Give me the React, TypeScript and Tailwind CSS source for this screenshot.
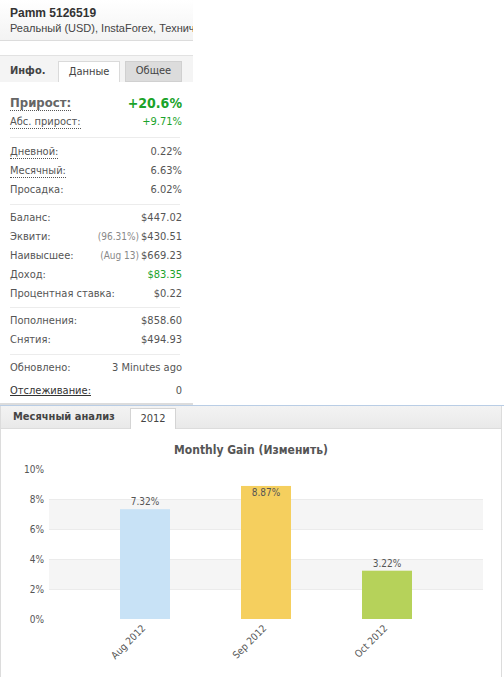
import React from "react";

const font = { fontFamily: '"DejaVu Sans Condensed", "DejaVu Sans", sans-serif' };

function Row({ label, value, dotted, underline, valueClass, pre }: { label: string; value: string; dotted?: boolean; underline?: boolean; valueClass?: string; pre?: string }) {
  return (
    <div className="flex justify-between items-center h-[19px] text-[11px] text-[#555]">
      <span className={dotted ? "border-b border-dotted border-[#555] leading-[12px]" : underline ? "underline text-[#333]" : ""}>{label}</span>
      <span className={valueClass ?? "text-[#555]"}>
        {pre && <span className="text-[10px] mr-[2px] text-[#888]">{pre}</span>}
        {value}
      </span>
    </div>
  );
}

function Divider({ cls = "my-[4px]" }: { cls?: string }) {
  return <div className={`h-px bg-[#ececec] mr-[2px] ${cls}`} />;
}

function Chart() {
  const y = (v: number) => 159 - v * 15;
  const bars = [
    { x: 119, v: 7.32, c: "#c8e2f6", label: "Aug 2012" },
    { x: 240, v: 8.87, c: "#f5cf5e", label: "Sep 2012" },
    { x: 361, v: 3.22, c: "#b6d25a", label: "Oct 2012" },
  ];
  return (
    <svg width="498" height="230" className="block" style={{ fontFamily: '"DejaVu Sans Condensed", "DejaVu Sans", sans-serif' }}>
      <rect x="48" y={y(8)} width="434" height="30" fill="#f5f5f5" />
      <rect x="48" y={y(4)} width="434" height="30" fill="#f5f5f5" />
      {[2, 4, 6, 8].map((v) => (
        <line key={v} x1="48" x2="482" y1={y(v) + 0.5} y2={y(v) + 0.5} stroke="#ebebeb" />
      ))}
      {[0, 2, 4, 6, 8, 10].map((v) => (
        <text key={v} x="43" y={y(v) + 4} textAnchor="end" fontSize="10" fill="#555">{v}%</text>
      ))}
      {bars.map((b) => (
        <g key={b.label}>
          <rect x={b.x} y={y(b.v)} width="50" height={b.v * 15} fill={b.c} />
          <text x={b.x + 25} y={y(b.v) + (b.v > 8.5 ? 10 : -4)} textAnchor="middle" fontSize="10" fill="#555">{b.v.toFixed(2)}%</text>
          <text transform={`translate(${b.x + 26} ${y(0) + 10}) rotate(-45)`} textAnchor="end" fontSize="10" fill="#555">{b.label}</text>
        </g>
      ))}
    </svg>
  );
}

export default function App() {
  return (
    <div className="w-[504px] h-[677px] bg-white overflow-hidden" style={font}>
      <div className="w-[193px]">
        <div className="h-[41px] bg-gradient-to-b from-white to-[#f3f3f3] border-b border-[#dcdcdc] pl-[10px] pt-[5px] overflow-hidden whitespace-nowrap">
          <div className="text-[12px] font-semibold text-[#333] leading-[16px]" style={{ fontFamily: '"Liberation Sans", sans-serif' }}>Pamm 5126519</div>
          <div className="text-[11px] text-[#444] leading-[14px]" style={{ fontFamily: '"Liberation Sans", sans-serif' }}>Реальный (USD), InstaForex, Техническая</div>
        </div>
        <div className="h-[14px]" />
        <div className="h-[27px] bg-[#f4f4f4] border-t border-[#e2e2e2] flex items-end pl-[10px]">
          <div className="text-[11px] font-bold text-[#444] h-[21px] flex items-center w-[48px]">Инфо.</div>
          <div className="h-[21px] w-[62px] bg-white border border-b-0 border-[#dadada] flex items-center justify-center text-[11px] text-[#444]">Данные</div>
          <div className="h-[21px] w-[57px] ml-[5px] bg-[#dcdcdc] border border-[#d0d0d0] flex items-center justify-center text-[11px] text-[#444]">Общее</div>
        </div>
        <div className="pl-[10px] pr-[11px] pt-[11px]">
          <div className="flex justify-between items-center h-[20px]">
            <span className="text-[13px] font-bold text-[#666] border-b border-dotted border-[#555] leading-[14px]">Прирост:</span>
            <span className="text-[14px] font-bold text-[#1aa32a]">+20.6%</span>
          </div>
          <Row label="Абс. прирост:" value="+9.71%" dotted valueClass="text-[#1aa32a]" />
          <Divider cls="my-[5px]" />
          <Row label="Дневной:" value="0.22%" dotted />
          <Row label="Месячный:" value="6.63%" dotted />
          <Row label="Просадка:" value="6.02%" />
          <Divider />
          <Row label="Баланс:" value="$447.02" />
          <Row label="Эквити:" value="$430.51" pre="(96.31%)" />
          <Row label="Наивысшее:" value="$669.23" pre="(Aug 13)" />
          <Row label="Доход:" value="$83.35" valueClass="text-[#1aa32a]" />
          <Row label="Процентная ставка:" value="$0.22" />
          <Divider cls="mt-[3px] mb-[4px]" />
          <Row label="Пополнения:" value="$858.60" />
          <Row label="Снятия:" value="$494.93" />
          <Divider />
          <Row label="Обновлено:" value="3 Minutes ago" />
          <div className="h-[4px]" />
          <Row label="Отслеживание:" value="0" underline />
        </div>
        <div className="h-[2px]" />
        <div className="h-[2px] bg-[#dcdcdc]" />
      </div>
      <div className="h-px bg-[#b9cde5]" />
      <div className="h-[23px] bg-gradient-to-b from-[#f3f3f3] to-[#e9e9e9] border-b border-[#d4d4d4] flex items-end border-x border-[#dcdcdc] mr-[2px]">
        <div className="text-[11px] font-bold text-[#444] h-[21px] flex items-center pl-[12px] w-[129px]">Месячный анализ</div>
        <div className="h-[21px] w-[46px] bg-white border border-b-0 border-[#d4d4d4] flex items-center justify-center text-[11px] text-[#444] -mb-px">2012</div>
      </div>
      <div className="border-x border-[#dcdcdc] mr-[2px] h-[260px]">
        <div className="text-center text-[12px] font-bold text-[#555] pt-[12px] h-[31px]">Monthly Gain (Изменить)</div>
        <Chart />
      </div>
    </div>
  );
}
